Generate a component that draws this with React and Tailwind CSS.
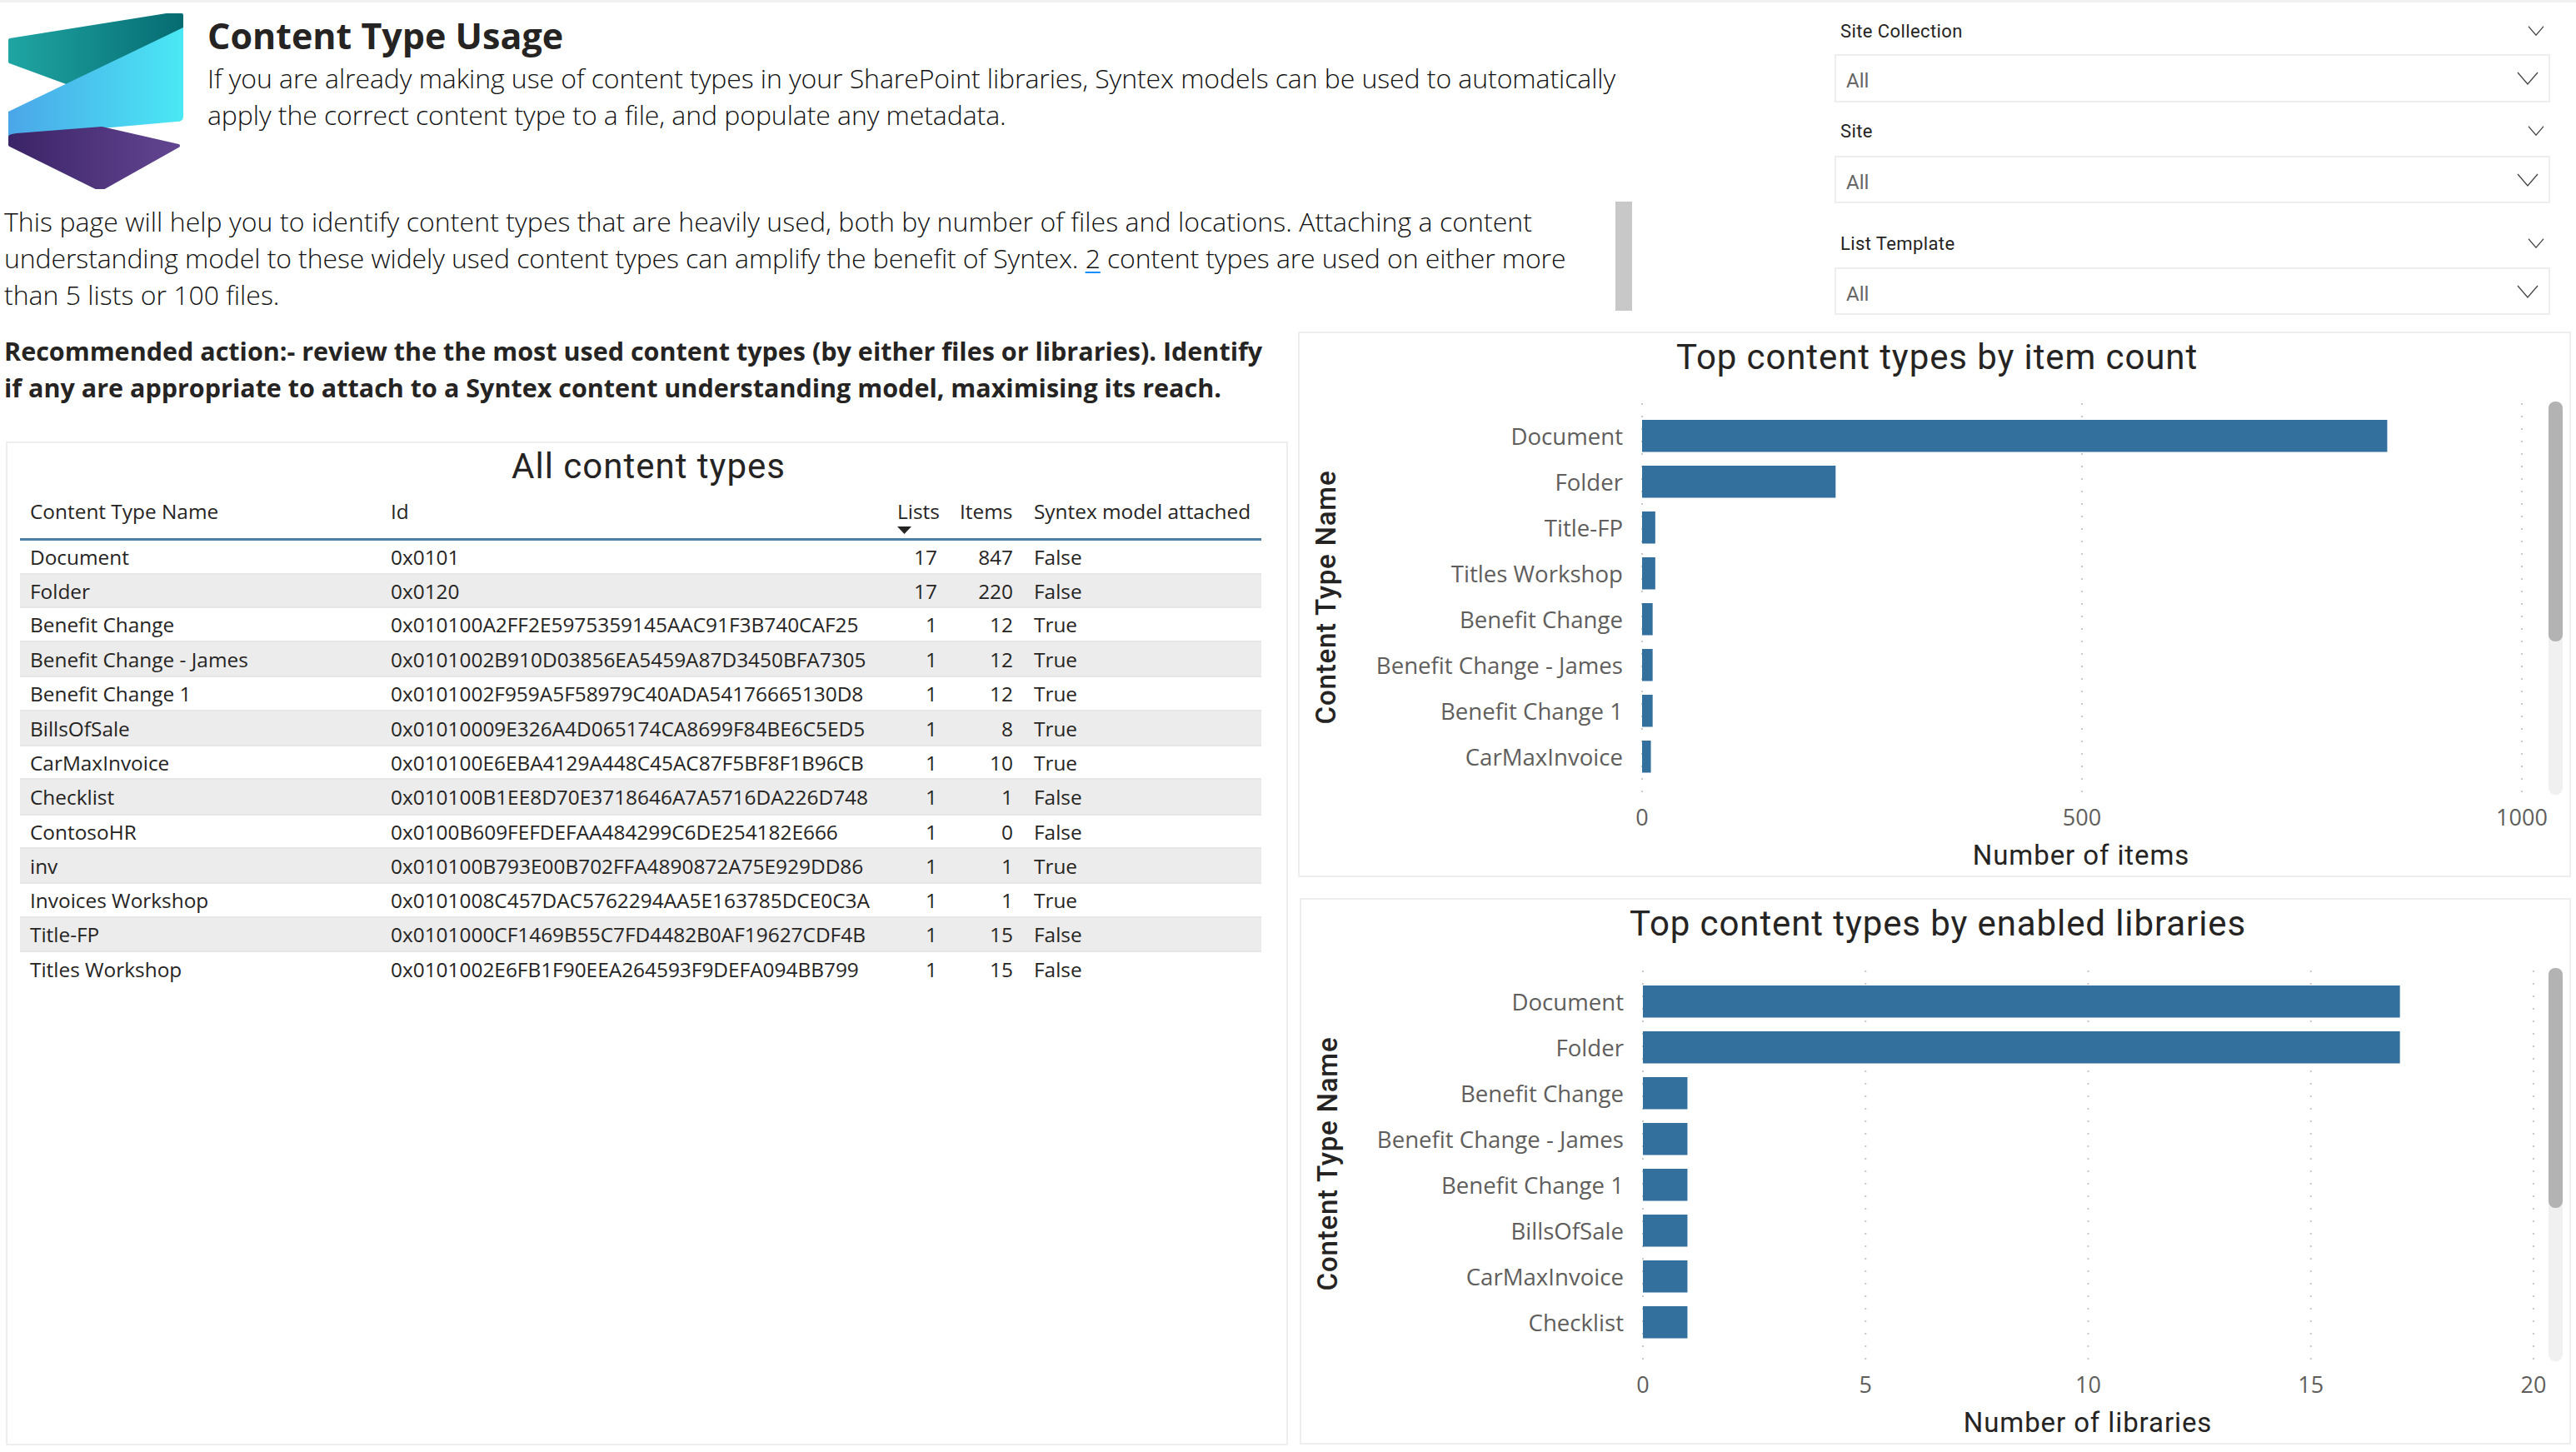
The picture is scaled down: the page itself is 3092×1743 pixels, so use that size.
import React from 'react';

const body = "font-['Open_Sans',sans-serif]";
const din = "font-['Roboto',sans-serif]";

const rows = [
  { name: 'Document', id: '0x0101', lists: 17, items: 847, syntex: 'False', h: 'h-[39px]' },
  { name: 'Folder', id: '0x0120', lists: 17, items: 220, syntex: 'False', h: 'h-[42px]' },
  { name: 'Benefit Change', id: '0x010100A2FF2E5975359145AAC91F3B740CAF25', lists: 1, items: 12, syntex: 'True', h: 'h-[39px]' },
  { name: 'Benefit Change - James', id: '0x0101002B910D03856EA5459A87D3450BFA7305', lists: 1, items: 12, syntex: 'True', h: 'h-[44px]' },
  { name: 'Benefit Change 1', id: '0x0101002F959A5F58979C40ADA54176665130D8', lists: 1, items: 12, syntex: 'True', h: 'h-[39px]' },
  { name: 'BillsOfSale', id: '0x01010009E326A4D065174CA8699F84BE6C5ED5', lists: 1, items: 8, syntex: 'True', h: 'h-[44px]' },
  { name: 'CarMaxInvoice', id: '0x010100E6EBA4129A448C45AC87F5BF8F1B96CB', lists: 1, items: 10, syntex: 'True', h: 'h-[38px]' },
  { name: 'Checklist', id: '0x010100B1EE8D70E3718646A7A5716DA226D748', lists: 1, items: 1, syntex: 'False', h: 'h-[45px]' },
  { name: 'ContosoHR', id: '0x0100B609FEFDEFAA484299C6DE254182E666', lists: 1, items: 0, syntex: 'False', h: 'h-[38px]' },
  { name: 'inv', id: '0x010100B793E00B702FFA4890872A75E929DD86', lists: 1, items: 1, syntex: 'True', h: 'h-[44px]' },
  { name: 'Invoices Workshop', id: '0x0101008C457DAC5762294AA5E163785DCE0C3A', lists: 1, items: 1, syntex: 'True', h: 'h-[39px]' },
  { name: 'Title-FP', id: '0x0101000CF1469B55C7FD4482B0AF19627CDF4B', lists: 1, items: 15, syntex: 'False', h: 'h-[43px]' },
  { name: 'Titles Workshop', id: '0x0101002E6FB1F90EEA264593F9DEFA094BB799', lists: 1, items: 15, syntex: 'False', h: 'h-[40px]' },
];

const itemBars = [
  ['Document', 847], ['Folder', 220], ['Title-FP', 15], ['Titles Workshop', 15],
  ['Benefit Change', 12], ['Benefit Change - James', 12], ['Benefit Change 1', 12], ['CarMaxInvoice', 10],
];

const libraryBars = [
  ['Document', 17], ['Folder', 17], ['Benefit Change', 1], ['Benefit Change - James', 1],
  ['Benefit Change 1', 1], ['BillsOfSale', 1], ['CarMaxInvoice', 1], ['Checklist', 1],
];

const columns = 'grid grid-cols-[433px_606px_76px_90px_285px]';

const Logo = () => (
  <svg width="230" height="240" viewBox="0 0 230 240" className="shrink-0">
    <defs>
      <linearGradient id="logoTeal" x1="0" y1="0" x2="1" y2="0">
        <stop offset="0" stopColor="#1fa5a3" />
        <stop offset="1" stopColor="#066c72" />
      </linearGradient>
      <linearGradient id="logoCyan" x1="0" y1="0" x2="1" y2="0">
        <stop offset="0" stopColor="#4ba6e8" />
        <stop offset="1" stopColor="#4ae8f4" />
      </linearGradient>
      <linearGradient id="logoPurple" x1="0" y1="0" x2="1" y2="0">
        <stop offset="0" stopColor="#3c2468" />
        <stop offset="1" stopColor="#624590" />
      </linearGradient>
    </defs>
    <path d="M12 48 L200 18 L218 18 L218 33 L80 99 L12 74 Z" fill="url(#logoTeal)" stroke="url(#logoTeal)" strokeWidth="4" strokeLinejoin="round" />
    <path d="M10 134 L220 33 L220 140 Q220 146 212 146 L122 154 L10 163 Z" fill="url(#logoCyan)" />
    <path d="M12 164 Q14 163 20 162 L122 154 L214 175 L125 225 L115 225 L12 174 Z" fill="url(#logoPurple)" stroke="url(#logoPurple)" strokeWidth="4" strokeLinejoin="round" />
  </svg>
);

const Chevron = ({ large }) => (
  <svg width={large ? 26 : 20} height={large ? 16 : 12} viewBox="0 0 26 16" fill="none" className="shrink-0">
    <path d="M1 1 L13 15 L25 1" stroke="#444444" strokeWidth={large ? 1.3 : 1.6} />
  </svg>
);

const Slicer = ({ label, className, boxClass }) => (
  <div className={className}>
    <div className="flex h-[30px] items-center justify-between pl-[7px] pr-[7px]">
      <span className="text-[22px] tracking-[0.4px] text-[#252423]">{label}</span>
      <Chevron />
    </div>
    <div className={`flex items-center justify-between border-2 border-[#eeeeee] pl-[12px] pr-[12px] ${boxClass}`}>
      <span className="pt-[6px] text-[24px] text-[#666666]">All</span>
      <Chevron large />
    </div>
  </div>
);

const BarChart = ({ bars, unit, ticks, axisTitle, x0, axisX, labelX, firstBar, gridTop, gridBottom, tickY, axisY, barX }) => (
  <svg width="100%" className="flex-1" style={{ display: 'block' }}>
    {ticks.map((t) => (
      <line
        key={t}
        x1={x0 + t * unit}
        x2={x0 + t * unit}
        y1={gridTop}
        y2={gridBottom}
        stroke="#c8c8c8"
        strokeWidth="2"
        strokeDasharray="2 13"
      />
    ))}
    {bars.map(([name, value], i) => (
      <g key={name}>
        <rect x={x0} y={firstBar + i * 55} width={value * unit} height="38.5" fill="#33709e" />
        <text x={labelX} y={firstBar + i * 55 + 19} textAnchor="end" dominantBaseline="central" fontSize="27.6" fill="#605e5c" fontFamily="'Open Sans', sans-serif">
          {name}
        </text>
      </g>
    ))}
    {ticks.map((t) => (
      <text key={t} x={x0 + t * unit} y={tickY - 1} textAnchor="middle" dominantBaseline="central" fontSize="27" fill="#605e5c" fontFamily="'Open Sans', sans-serif">
        {t}
      </text>
    ))}
    <text x={axisX} y={axisY - 1} textAnchor="middle" dominantBaseline="central" fontSize="33" letterSpacing="0.9" fill="#252423" fontFamily="'Roboto', sans-serif">
      {axisTitle}
    </text>
    <text
      transform="translate(31 257) rotate(-90)"
      textAnchor="middle"
      dominantBaseline="central"
      fontSize="33"
      letterSpacing="0.8"
      fontWeight="500"
      fill="#252423"
      fontFamily="'Roboto', sans-serif"
    >
      Content Type Name
    </text>
    <rect x={barX} y="22" width="17" height="472" rx="8" fill="#f0f0f0" />
    <rect x={barX} y="22" width="17" height="288" rx="8" fill="#b3b3b3" />
  </svg>
);

const ChartCard = ({ title, className, children }) => (
  <div className={`flex flex-col border-2 border-[#eeeeee] ${className}`}>
    <div className={`flex h-[60px] items-center justify-center pb-[3px] pl-[6px] text-[42px] tracking-[0.9px] text-[#252423] ${din}`}>{title}</div>
    {children}
  </div>
);

const App = () => (
  <div className={`h-[1743px] w-[3092px] overflow-hidden border-t-[3px] border-[#f0f0f0] bg-white text-[#252423] ${body}`}>
    <div className="flex h-[395px]">
      <div className="w-[1960px] shrink-0">
        <div className="flex h-[239px] gap-[19px]">
          <div className="-mt-[3px]">
            <Logo />
          </div>
          <div>
            <h1 className="mt-[16px] text-[43px] leading-[48px] font-bold">Content Type Usage</h1>
            <p className="mt-[5px] text-[32px] leading-[44px] font-light tracking-[-0.08px] text-[#111111]">
              If you are already making use of content types in your SharePoint libraries, Syntex models can be used to automatically
              <br />
              apply the correct content type to a file, and populate any metadata.
            </p>
          </div>
        </div>
        <div className="flex">
          <p className="w-[1939px] pt-[2px] pl-[5px] text-[32px] leading-[44px] font-light text-[#111111]">
            <span className="tracking-[0.06px]">
              This page will help you to identify content types that are heavily used, both by number of files and locations. Attaching a content
            </span>
            <br />
            <span className="tracking-[-0.1px]">
              understanding model to these widely used content types can amplify the benefit of Syntex.{' '}
              <span className="underline decoration-[#118dff] decoration-2 underline-offset-4">2</span> content types are used on either more
            </span>
            <br />
            than 5 lists or 100 files.
          </p>
          <div className="h-[131px] w-[20px] shrink-0 bg-[#c8c8c8]" />
        </div>
      </div>
      <div className={`ml-[242px] w-[859px] ${din}`}>
        <Slicer label="Site Collection" className="pt-[19px]" boxClass="mt-[13px] h-[58px]" />
        <Slicer label="Site" className="mt-[19px]" boxClass="mt-[15px] h-[57px]" />
        <Slicer label="List Template" className="mt-[33px]" boxClass="mt-[14px] h-[57px]" />
      </div>
    </div>

    <div className="flex">
      <div className="w-[1558px] shrink-0 pl-[5px]">
        <p className="h-[132px] pt-[2px] text-[30.5px] leading-[43.5px] font-bold whitespace-nowrap">
          Recommended action:- review the the most used content types (by either files or libraries). Identify
          <br />
          if any are appropriate to attach to a Syntex content understanding model, maximising its reach.
        </p>
        <div className="ml-[2px] h-[1205px] w-[1539px] border-2 border-[#eeeeee] px-[15px]">
          <div className={`flex h-[54px] items-center justify-center pl-[4px] text-[42px] tracking-[1px] ${din}`}>All content types</div>
          <div className="w-[1490px]">
            <div className={`${columns} h-[63px] items-center border-b-[3px] border-[#4a80a8] pb-[3px] text-[24.4px]`}>
              <div className="pl-[12px]">Content Type Name</div>
              <div className="pl-[12px]">Id</div>
              <div className="relative pl-[14px]">
                Lists
                <svg width="17" height="9" viewBox="0 0 17 9" className="absolute top-[36px] left-[14px]">
                  <path d="M0 0 L17 0 L8.5 9 Z" fill="#252423" />
                </svg>
              </div>
              <div className="pl-[13px]">Items</div>
              <div className="pl-[12px] whitespace-nowrap">Syntex model attached</div>
            </div>
            {rows.map((row, i) => (
              <div
                key={row.name}
                className={`${columns} ${row.h} items-center pt-[2px] text-[24.4px] ${i % 2 === 1 ? 'border-y-2 border-[#e6e6e6] bg-[#ececec]' : ''}`}
              >
                <div className="pl-[12px]">{row.name}</div>
                <div className="pl-[12px]">{row.id}</div>
                <div className="pr-[14px] text-right">{row.lists}</div>
                <div className="pr-[13px] text-right">{row.items}</div>
                <div className="pl-[12px]">{row.syntex}</div>
              </div>
            ))}
          </div>
        </div>
      </div>

      <div className="w-[1528px]">
        <ChartCard title="Top content types by item count" className="h-[655px]">
          <BarChart
            bars={itemBars}
            unit={1.056}
            ticks={[0, 500, 1000]}
            axisTitle="Number of items"
            x0={411}
            axisX={938}
            labelX={388}
            firstBar={44}
            gridTop={24}
            gridBottom={494}
            tickY={521}
            axisY={567}
            barX={1499}
          />
        </ChartCard>
        <ChartCard title="Top content types by enabled libraries" className="mt-[25px] ml-[2px] h-[656px]">
          <BarChart
            bars={libraryBars}
            unit={53.45}
            ticks={[0, 5, 10, 15, 20]}
            axisTitle="Number of libraries"
            x0={410}
            axisX={944}
            labelX={387}
            firstBar={43}
            gridTop={25}
            gridBottom={495}
            tickY={522}
            axisY={568}
            barX={1497}
          />
        </ChartCard>
      </div>
    </div>
  </div>
);

export default App;
